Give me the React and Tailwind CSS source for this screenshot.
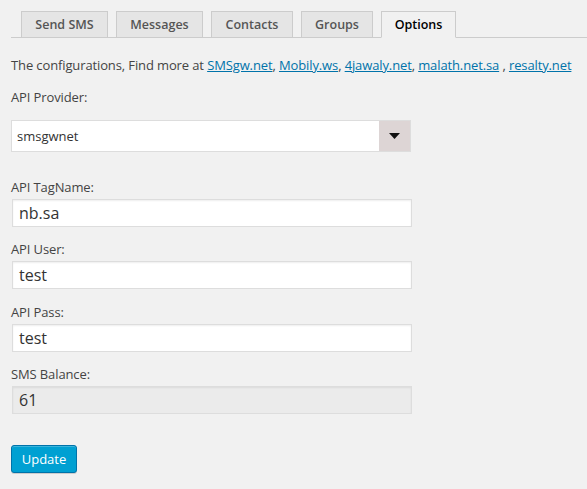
import React from 'react'

const tabs = [
  { label: 'Send SMS', w: 'w-[87px]' },
  { label: 'Messages', w: 'w-[87px]' },
  { label: 'Contacts', w: 'w-[82px]' },
  { label: 'Groups', w: 'w-[72px]' },
  { label: 'Options', w: 'w-[75px]' },
]

const links = ['SMSgw.net', 'Mobily.ws', '4jawaly.net', 'malath.net.sa', 'resalty.net']

function Field({ label, value, disabled, gap = 'mt-[12px]' }) {
  return (
    <div className={gap}>
      <div className="h-[20px] leading-[20px] text-[13px] tracking-[-0.12px] text-[#444]">{label}</div>
      <div
        className={
          'mt-[2px] ml-[1px] w-[400px] h-[28px] border border-[#ddd] px-[6px] text-[16px] leading-[26px] text-[#333] shadow-[inset_0_1px_2px_rgba(0,0,0,0.07)] ' +
          (disabled ? 'bg-[#ebebeb]' : 'bg-white')
        }
      >
        {value}
      </div>
    </div>
  )
}

export default function App() {
  return (
    <div className="min-h-[489px] bg-[#f1f1f1] pt-[11px] font-['Open_Sans',sans-serif]">
      {/* ── Tabs ─────────────────────────────────────────────── */}
      <div className="ml-[11px] flex gap-[8px] border-b border-[#ccc] pl-[10px]">
        {tabs.map((t) => {
          const active = t.label === 'Options'
          return (
            <div
              key={t.label}
              className={
                t.w +
                ' h-[27px] text-center border border-[#ccc] -mb-px text-[12.5px] font-semibold leading-[25px] ' +
                (active
                  ? 'bg-[#f1f1f1] border-b-[#f1f1f1] text-black'
                  : 'bg-[#e5e5e5] text-[#555]')
              }
            >
              {t.label}
            </div>
          )
        })}
      </div>

      <div className="pl-[11px]">
        {/* ── Intro ─────────────────────────────────────────── */}
        <p className="mt-[17px] text-[13px] tracking-[-0.12px] leading-[20px] text-[#444]">
          The configurations, Find more at{' '}
          {links.map((l, i) => (
            <React.Fragment key={l}>
              <a href="#" className="text-[#0073aa] underline">{l}</a>
              {i < links.length - 2 ? ', ' : i === links.length - 2 ? ' , ' : ''}
            </React.Fragment>
          ))}
        </p>

        {/* ── Provider ──────────────────────────────────────── */}
        <div className="mt-[12px] h-[20px] leading-[20px] text-[13px] tracking-[-0.12px] text-[#444]">API Provider:</div>
        <div className="mt-[13px] flex w-[400px] h-[32px] border border-[#ddd] bg-white">
          <div className="flex-1 pl-[5px] text-[13px] leading-[30px] text-[#333]">smsgwnet</div>
          <div className="w-[31px] bg-[#ddd5d5] flex items-center justify-center">
            <svg width="11" height="6" viewBox="0 0 11 6">
              <polygon points="0,0 11,0 5.5,6" fill="#111" />
            </svg>
          </div>
        </div>

        {/* ── Fields ────────────────────────────────────────── */}
        <div className="mt-[25px]">
          <Field label="API TagName:" value="nb.sa" gap="mt-0" />
          <Field label="API User:" value="test" />
          <Field label="API Pass:" value="test" gap="mt-[13px]" />
          <Field label="SMS Balance:" value="61" disabled />
        </div>

        <button className="mt-[31px] w-[66px] h-[28px] rounded-[3px] border border-[#0073aa] bg-[#00a0d2] text-[13px] leading-[26px] text-white shadow-[inset_0_1px_0_rgba(120,200,230,0.5),0_1px_0_rgba(0,0,0,0.15)]">
          Update
        </button>
      </div>
    </div>
  )
}
